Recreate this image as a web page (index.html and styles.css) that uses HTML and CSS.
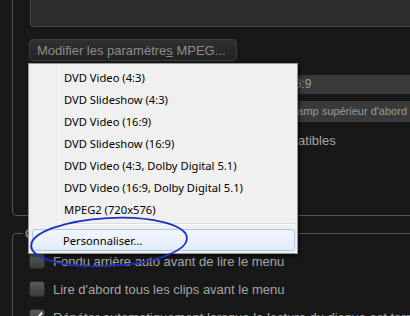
FILE: index.html
```html
<!DOCTYPE html>
<html lang="fr">
<head>
    <meta charset="UTF-8">
    <title>Paramètres du disque</title>
    <link rel="stylesheet" href="styles.css">
</head>
<body>
    <div class="group group-disc">
        <div class="preview-panel"></div>
        <button class="dark-button">Modifier les paramètre<u>s</u> MPEG...</button>
        <div class="field-row">
            <div class="field field-aspect">Format : 16:9</div>
        </div>
        <div class="field-row">
            <div class="field field-order">Ordre des trames : champ supérieur d'abord</div>
        </div>
        <div class="text-row">Créer des menus compatibles</div>
    </div>

    <div class="group group-options">
        <span class="group-title">Options de lecture</span>
        <div class="checks">
            <label class="check"><span class="box"></span>Fondu arrière auto avant de lire le menu</label>
            <label class="check"><span class="box"></span>Lire d'abord tous les clips avant le menu</label>
            <label class="check"><span class="box checked"></span>Répéter automatiquement lorsque la lecture du disque est terminée</label>
        </div>
    </div>

    <div class="menu">
        <div class="menu-item">DVD Video (4:3)</div>
        <div class="menu-item">DVD Slideshow (4:3)</div>
        <div class="menu-item">DVD Video (16:9)</div>
        <div class="menu-item">DVD Slideshow (16:9)</div>
        <div class="menu-item">DVD Video (4:3, Dolby Digital 5.1)</div>
        <div class="menu-item">DVD Video (16:9, Dolby Digital 5.1)</div>
        <div class="menu-item">MPEG2 (720x576)</div>
        <div class="menu-separator"></div>
        <div class="menu-item active">Personnaliser...</div>
    </div>

    <!-- hand drawn circle around the last entry -->
    <svg class="marker" width="410" height="316" viewBox="0 0 410 316">
        <ellipse cx="109" cy="242" rx="78" ry="24" transform="rotate(-3 109 242)" fill="none" stroke="#1d2fbf" stroke-width="1.8"/>
    </svg>
</body>
</html>
```

FILE: styles.css
```css
body {
    margin: 0;
    height: 316px;
    overflow: hidden;
    background: #181818;
    font-family: "Liberation Sans", Arial, sans-serif;
    font-size: 13px;
    color: #a6a6a6;
    position: relative;
}
.group {
    border: 1px solid #565656;
    border-right: none;
    margin-left: 12px;
    box-sizing: border-box;
}
.group-disc {
    margin-top: -10px;
    height: 226px;
    border-top: none;
    border-radius: 0 0 0 5px;
    padding-left: 17px;
}
.preview-panel {
    height: 36px;
    background: #2c2c2c;
    border: 1px solid #454545;
    border-top: none;
    border-right: none;
    border-radius: 0 0 0 4px;
}
.dark-button {
    display: block;
    margin: 12px 0 0 -1px;
    width: 208px;
    height: 22px;
    padding: 0 0 0 7px;
    text-align: left;
    font-family: inherit;
    font-size: 13px;
    color: #8c8c8c;
    background: linear-gradient(#313131, #222222);
    border: 1px solid #3d3d3d;
    border-radius: 4px;
}
.dark-button u {
    text-decoration-thickness: 1px;
}
.field-row {
    display: flex;
}
.field {
    background: #3a3a3a;
    color: #9a9a9a;
    font-size: 12px;
    white-space: nowrap;
}
.field-aspect {
    margin: 14px 0 0 180px;
    width: 300px;
    height: 19px;
    line-height: 19px;
    padding-left: 30px;
}
.field-order {
    margin: 7px 0 0 150px;
    width: 228px;
    height: 21px;
    line-height: 21px;
    font-size: 11px;
    text-align: right;
    padding-right: 3px;
    overflow: hidden;
}
.text-row {
    margin: 11px 0 0 133px;
    line-height: 16px;
    white-space: nowrap;
}
.group-options {
    margin-top: 17px;
    height: 120px;
    border-bottom: none;
    border-radius: 5px 0 0 0;
}
.group-title {
    display: inline-block;
    margin: -8px 0 0 10px;
    padding: 0 2px;
    line-height: 15px;
    background: #181818;
    vertical-align: top;
}
.checks {
    display: flex;
    flex-direction: column;
    gap: 12px;
    margin-top: 4px;
    padding-left: 16px;
}
.check {
    display: flex;
    align-items: center;
    gap: 8px;
    height: 16px;
    white-space: nowrap;
}
.box {
    flex: none;
    width: 14px;
    height: 14px;
    border: 1px solid #2a2a2a;
    border-radius: 3px;
    background: linear-gradient(#5a5a5a, #3c3c3c);
    position: relative;
}
.box.checked::after {
    content: "";
    position: absolute;
    left: 4px;
    top: 0;
    width: 4px;
    height: 9px;
    border: solid #f2f2f2;
    border-width: 0 2px 2px 0;
    transform: rotate(40deg);
}
.menu {
    position: absolute;
    left: 28px;
    top: 63px;
    width: 264px;
    padding: 2px 2px 2px 2px;
    background: linear-gradient(to right, transparent 28px, #e2e3e3 28px, #e2e3e3 29px, #ffffff 29px, #ffffff 30px, transparent 30px) #f0f0f0;
    border: 1px solid #979797;
    box-shadow: 2px 2px 3px rgba(0, 0, 0, 0.55);
    font-family: "Noto Sans", "Open Sans", sans-serif;
    font-size: 11.2px;
    color: #000;
}
.menu-item {
    height: 22px;
    line-height: 22px;
    padding-left: 32px;
    margin-left: 1px;
    border: 1px solid transparent;
    border-left: none;
    border-right: none;
    box-sizing: border-box;
    white-space: nowrap;
}
.menu-item.active {
    border: 1px solid #a9c8ea;
    border-radius: 3px;
    padding-left: 30px;
    background: linear-gradient(#f2f6fb, #e3ecf8);
}
.menu-separator {
    height: 1px;
    margin: 3px 0 4px 31px;
    background: #dadbdb;
    border-bottom: 1px solid #ffffff;
}
.marker {
    position: absolute;
    left: 0;
    top: 0;
}
```
